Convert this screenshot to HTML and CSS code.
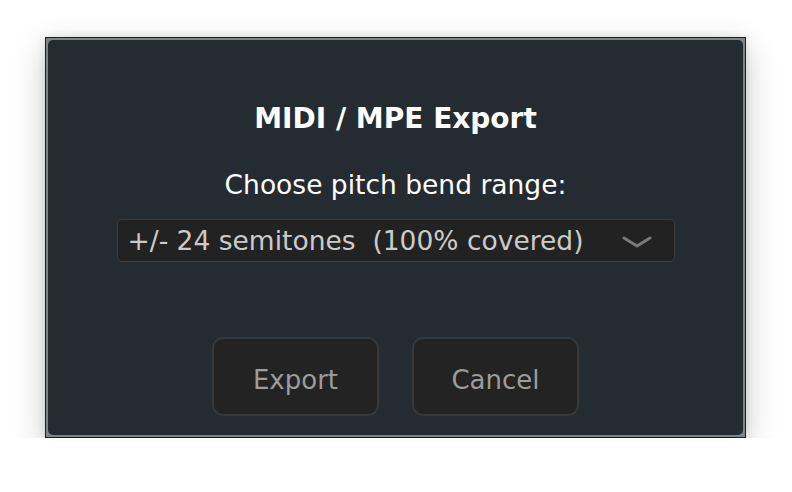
FILE: index.html
```html
<!DOCTYPE html>
<html lang="en">
  <head>
    <meta charset="UTF-8" />
    <title>MIDI / MPE Export</title>
    <link rel="stylesheet" href="styles.css">
  </head>
  <body>
    <div class="frame">
      <div class="dialog">
        <h1 class="title">MIDI / MPE Export</h1>
        <p class="label">Choose pitch bend range:</p>
        <div class="select">
          <span class="value">+/- 24 semitones&nbsp; (100% covered)</span>
          <svg class="chevron" width="30" height="12" viewBox="0 0 30 12">
            <path d="M2 2 L15 10 L28 2" fill="none" stroke="#7a7a7a" stroke-width="3" stroke-linecap="round" stroke-linejoin="round" />
          </svg>
        </div>
        <div class="btns">
          <button class="btn" type="button">Export</button>
          <button class="btn" type="button">Cancel</button>
        </div>
      </div>
    </div>
  </body>
</html>
```

FILE: styles.css
```css
body {
  margin: 0;
  background: #ffffff;
  font-family: "DejaVu Sans", "Noto Sans", sans-serif;
}
.frame {
  margin: 37px 0 0 45px;
  width: 695px;
  height: 395px;
  padding: 2px;
  border: 1px solid #1c1e20;
  background: #7e8588;
  box-shadow: 0 10px 30px rgba(0, 0, 0, 0.22), 0 0 8px rgba(0, 0, 0, 0.1);
}
.dialog {
  height: 100%;
  box-sizing: border-box;
  border-radius: 5px;
  background: #242b31;
  display: flex;
  flex-direction: column;
  align-items: center;
  padding-top: 63px;
}
.title {
  margin: 0;
  font-size: 28px;
  line-height: 32px;
  font-weight: 700;
  color: #ffffff;
}
.label {
  margin: 35px 0 0;
  font-size: 26.5px;
  line-height: 30px;
  color: #ffffff;
}
.select {
  margin-top: 19px;
  width: 558px;
  height: 43px;
  box-sizing: border-box;
  border: 1px solid #3a3d40;
  border-radius: 5px;
  background: #222222;
  display: flex;
  align-items: center;
  justify-content: space-between;
  padding: 0 22px 0 10px;
}
.value {
  font-size: 26.5px;
  color: #cbcbcb;
  white-space: nowrap;
}
.chevron {
  margin-top: 2px;
}
.btns {
  margin-top: 75px;
  display: flex;
  gap: 33px;
}
.btn {
  width: 167px;
  height: 79px;
  border: 2px solid #35393c;
  border-radius: 11px;
  background: #232323;
  color: #9c9c9c;
  font-family: "DejaVu Sans", "Noto Sans", sans-serif;
  font-size: 26px;
  padding: 6px 0 0;
}
```
